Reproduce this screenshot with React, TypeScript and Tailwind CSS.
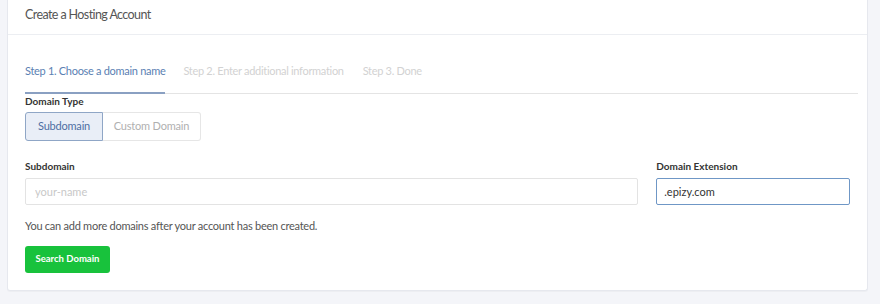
export default function App() {
  return (
    <div
      className="w-[880px] h-[304px] bg-[#f4f5f9] overflow-hidden"
      style={{ fontFamily: "Lato, 'Open Sans', sans-serif" }}
    >
      <div className="ml-[7px] w-[861px] h-[291px] bg-white border border-t-0 border-[#e6e8ee] rounded-b-[3px] shadow-[0_1px_1px_rgba(0,0,0,0.03)]">
        {/* Header */}
        <div className="h-[35px] border-b border-[#eceef2] px-[17px] flex items-center">
          <h1 className="text-[12.5px] tracking-[-0.6px] text-[#555] -mt-[4px]">Create a Hosting Account</h1>
        </div>

        <div className="px-[17px]">
          {/* Steps */}
          <div className="mt-[28px] -mr-[8px] flex border-b border-[#e4e4e4] text-[11px] tracking-[-0.3px]">
            <div className="pb-[12px] text-[#5b7fb3] border-b-2 border-[#8aa0c2] -mb-[1px]">
              Step 1. Choose a domain name
            </div>
            <div className="pb-[12px] ml-[18px] text-[#d2d2d2]">Step 2. Enter additional information</div>
            <div className="pb-[12px] ml-[19px] text-[#d2d2d2]">Step 3. Done</div>
          </div>

          {/* Domain type */}
          <div className="text-[10px] font-bold text-[#333]">Domain Type</div>
          <div className="mt-[3px] flex text-[11px] tracking-[-0.2px]">
            <button className="h-[29px] w-[78px] bg-[#e9eef7] border border-[#8fa6c6] rounded-l-[3px] text-[#4e6fa3]">
              Subdomain
            </button>
            <button className="h-[29px] w-[98px] bg-white border border-l-0 border-[#e6e6e6] rounded-r-[3px] text-[#b0b0b0]">
              Custom Domain
            </button>
          </div>

          {/* Fields */}
          <div className="mt-[18px] flex gap-[18px]">
            <div className="w-[614px]">
              <label className="block text-[10px] font-bold text-[#333]">Subdomain</label>
              <input
                placeholder="your-name"
                className="mt-[4px] w-full h-[27px] border border-[#e3e3e3] rounded-[2px] px-[9px] text-[11px] text-[#333] placeholder:text-[#c8c8c8] outline-none"
              />
            </div>
            <div className="w-[194px]">
              <label className="block text-[10px] font-bold text-[#333]">Domain Extension</label>
              <input
                defaultValue=".epizy.com"
                className="mt-[4px] w-full h-[27px] border border-[#6f97c6] rounded-[2px] px-[7px] text-[11px] text-[#333] outline-none"
              />
            </div>
          </div>

          <p className="mt-[13px] text-[11px] tracking-[-0.25px] text-[#555]">
            You can add more domains after your account has been created.
          </p>

          <button className="mt-[12px] h-[27px] w-[85px] bg-[#18c23c] rounded-[3px] text-white text-[9.5px] font-bold">
            Search Domain
          </button>
        </div>
      </div>
    </div>
  );
}
